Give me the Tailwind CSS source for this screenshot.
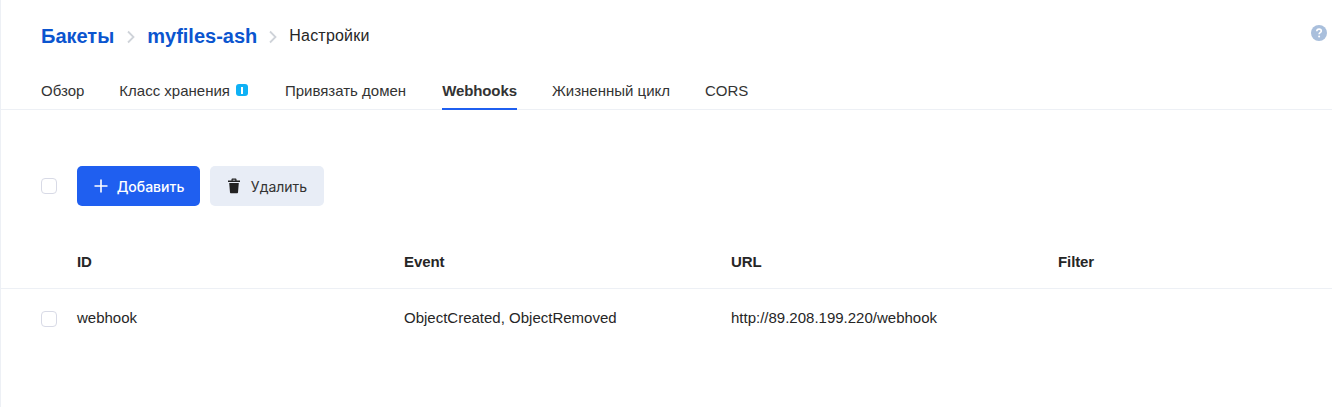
<!DOCTYPE html>
<html lang="ru">
<head>
  <meta charset="UTF-8" />
  <title>Настройки бакета</title>
  <script src="https://cdn.jsdelivr.net/npm/@tailwindcss/browser@4"></script>
</head>
<body class="bg-white font-['Liberation_Sans',sans-serif] text-[#262626]">
  <div class="h-[407px] overflow-hidden border-l border-[#edf0f5]">
    <!-- Breadcrumbs -->
    <div class="flex items-center justify-between h-[70px] pl-[40px] pr-[5px]">
      <div class="flex items-center pt-[1px]">
        <a class="text-[20px] font-bold text-[#0b55cf]">Бакеты</a>
        <svg class="ml-[12px] mr-[11px] mt-[2px]" width="10" height="14" viewBox="0 0 10 14" fill="none" stroke="#cfd3d9" stroke-width="1.8"><path d="M2 1.500l5.500 5.500-5.500 5.500" /></svg>
        <a class="text-[20px] font-bold text-[#0b55cf]">myfiles-ash</a>
        <svg class="ml-[11px] mr-[11px] mt-[2px]" width="10" height="14" viewBox="0 0 10 14" fill="none" stroke="#cfd3d9" stroke-width="1.8"><path d="M2 1.500l5.500 5.500-5.500 5.500" /></svg>
        <span class="text-[16px] tracking-[0.2px]">Настройки</span>
      </div>
      <svg class="mb-[4px]" width="16" height="16" viewBox="0 0 16 16">
        <circle cx="8" cy="8" r="8" fill="#a9bfdc" />
        <path d="M5.800 6.200c0-1.300 1-2.100 2.300-2.100s2.200.8 2.200 1.900c0 1.700-2.200 1.700-2.200 3.300" fill="none" stroke="#fff" stroke-width="1.600" />
        <circle cx="8.100" cy="11.600" r="1" fill="#fff" />
      </svg>
    </div>

    <!-- Tabs -->
    <div class="flex h-[40px] gap-[35px] pl-[40px] border-b border-[#edf0f5] text-[15px] text-[#333]">
      <a class="pt-[10px]">Обзор</a>
      <a class="flex items-start pt-[10px] mr-[2px]">Класс хранения
        <span class="ml-[6px] mt-[4px] flex h-[12px] w-[12px] items-center justify-center rounded-[3px] bg-[#0fb1f5]"><span class="h-[7px] w-[2px] bg-white"></span></span>
      </a>
      <a class="pt-[10px] mr-[1px]">Привязать домен</a>
      <a class="pt-[10px] font-bold tracking-[-0.1px] border-b-2 border-[#1f5ff0] h-[40px]">Webhooks</a>
      <a class="pt-[10px]">Жизненный цикл</a>
      <a class="pt-[10px]">CORS</a>
    </div>

    <!-- Toolbar -->
    <div class="flex items-center pl-[40px] mt-[56px]">
      <span class="h-[16px] w-[16px] rounded-[4px] border border-[#d8dae6] bg-white"></span>
      <button class="ml-[20px] flex h-[40px] w-[123px] items-center justify-center gap-[8px] rounded-[5px] bg-[#1f5ff0] font-['Inter',sans-serif] text-[14px] font-medium text-white">
        <svg width="16" height="16" viewBox="0 0 16 16" fill="none" stroke="#fff" stroke-width="1.6"><path d="M8 1.500v13M1.500 8h13" /></svg>
        Добавить
      </button>
      <button class="ml-[10px] flex h-[40px] w-[114px] items-center justify-center gap-[10px] rounded-[5px] bg-[#e8edf6] font-['Inter',sans-serif] text-[14px] text-[#333]">
        <svg width="14" height="16" viewBox="0 0 14 16" fill="#222"><path d="M4.500 2.400V1.500C4.500 1 5 .6 5.500 .6h3c.5 0 1 .4 1 .9v.9H13V4H1V2.400zM5.700 2.400h2.600V1.700H5.700zM2.200 5h9.600l-.8 9.400c0 .5-.5.8-1 .8H4c-.5 0-1-.3-1-.8z" /></svg>
        Удалить
      </button>
    </div>

    <!-- Table -->
    <div class="mt-[30px] border-b border-[#edf0f5] h-[53px] grid grid-cols-[327px_327px_327px_1fr] items-center pl-[76px] text-[15px] font-bold tracking-[-0.1px]">
      <span>ID</span>
      <span>Event</span>
      <span>URL</span>
      <span>Filter</span>
    </div>
    <div class="relative h-[58px] grid grid-cols-[327px_327px_327px_1fr] items-center pl-[76px] text-[15px]">
      <span class="absolute left-[40px] top-[22px] h-[16px] w-[16px] rounded-[4px] border border-[#d8dae6] bg-white"></span>
      <span>webhook</span>
      <span>ObjectCreated, ObjectRemoved</span>
      <span>http://89.208.199.220/webhook</span>
      <span></span>
    </div>
  </div>
</body>
</html>
